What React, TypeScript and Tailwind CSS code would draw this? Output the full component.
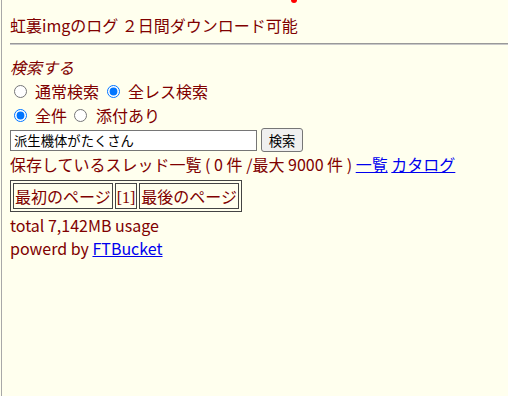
import React from "react";

export default function App() {
  return (
    <div className="min-h-[396px] bg-[#ffffee] text-[#800000] font-['Noto_Sans_CJK_JP',sans-serif] text-[16px] leading-[23px]">
      <div className="ml-[1px] min-h-[396px] border-l border-[#a8a8a8] pl-[8px]">
        <div className="h-[14px]">
          <div className="ml-[281px] h-[3px] w-[6px] rounded-b-full bg-[#ff0000]" />
        </div>
        <div>虹裏imgのログ ２日間ダウンロード可能</div>
        <div className="mt-[6px] h-[2px] border-t border-b border-t-[#999999] border-b-[#c8c8c8]" />
        <div className="mt-[11px] italic">検索する</div>
        <div className="flex h-[24px] items-center">
          <input type="radio" name="m" className="ml-[4px] mr-[8px] h-[13px] w-[13px]" />
          <span>通常検索</span>
          <input type="radio" name="m" defaultChecked className="ml-[8px] mr-[8px] h-[13px] w-[13px]" />
          <span>全レス検索</span>
        </div>
        <div className="flex h-[24px] items-center">
          <input type="radio" name="f" defaultChecked className="ml-[4px] mr-[8px] h-[13px] w-[13px]" />
          <span>全件</span>
          <input type="radio" name="f" className="ml-[7px] mr-[9px] h-[13px] w-[13px]" />
          <span>添付あり</span>
        </div>
        <div className="mt-[1px] flex h-[24px] items-center">
          <input
            type="text"
            defaultValue="派生機体がたくさん"
            className="h-[21px] w-[247px] border border-[#767676] bg-white px-[3px] text-[13.33px] leading-[16px] text-black outline-none"
          />
          <button className="ml-[4px] h-[24px] w-[42px] rounded-[3px] border border-[#767676] bg-[#efefef] text-[13.33px] text-black">
            検索
          </button>
        </div>
        <div className="mt-[1px]">
          保存しているスレッド一覧 ( 0 件 /最大 9000 件 ){" "}
          <a href="#" className="text-[#0000ee] underline">一覧</a>{" "}
          <a href="#" className="text-[#0000ee] underline">カタログ</a>
        </div>
        <div className="mt-[4px] inline-flex gap-[2px] border border-[#444] p-[2px] leading-[22px]">
          <div className="border border-[#444] p-[1px]">最初のページ</div>
          <div className="border border-[#444] p-[1px] font-['Liberation_Serif',serif]">
            <span className="relative top-[2px]">[1]</span>
          </div>
          <div className="border border-[#444] p-[1px]">最後のページ</div>
        </div>
        <div className="mt-[2px]">total 7,142MB usage</div>
        <div>
          powerd by <a href="#" className="text-[#0000ee] underline">FTBucket</a>
        </div>
      </div>
    </div>
  );
}
